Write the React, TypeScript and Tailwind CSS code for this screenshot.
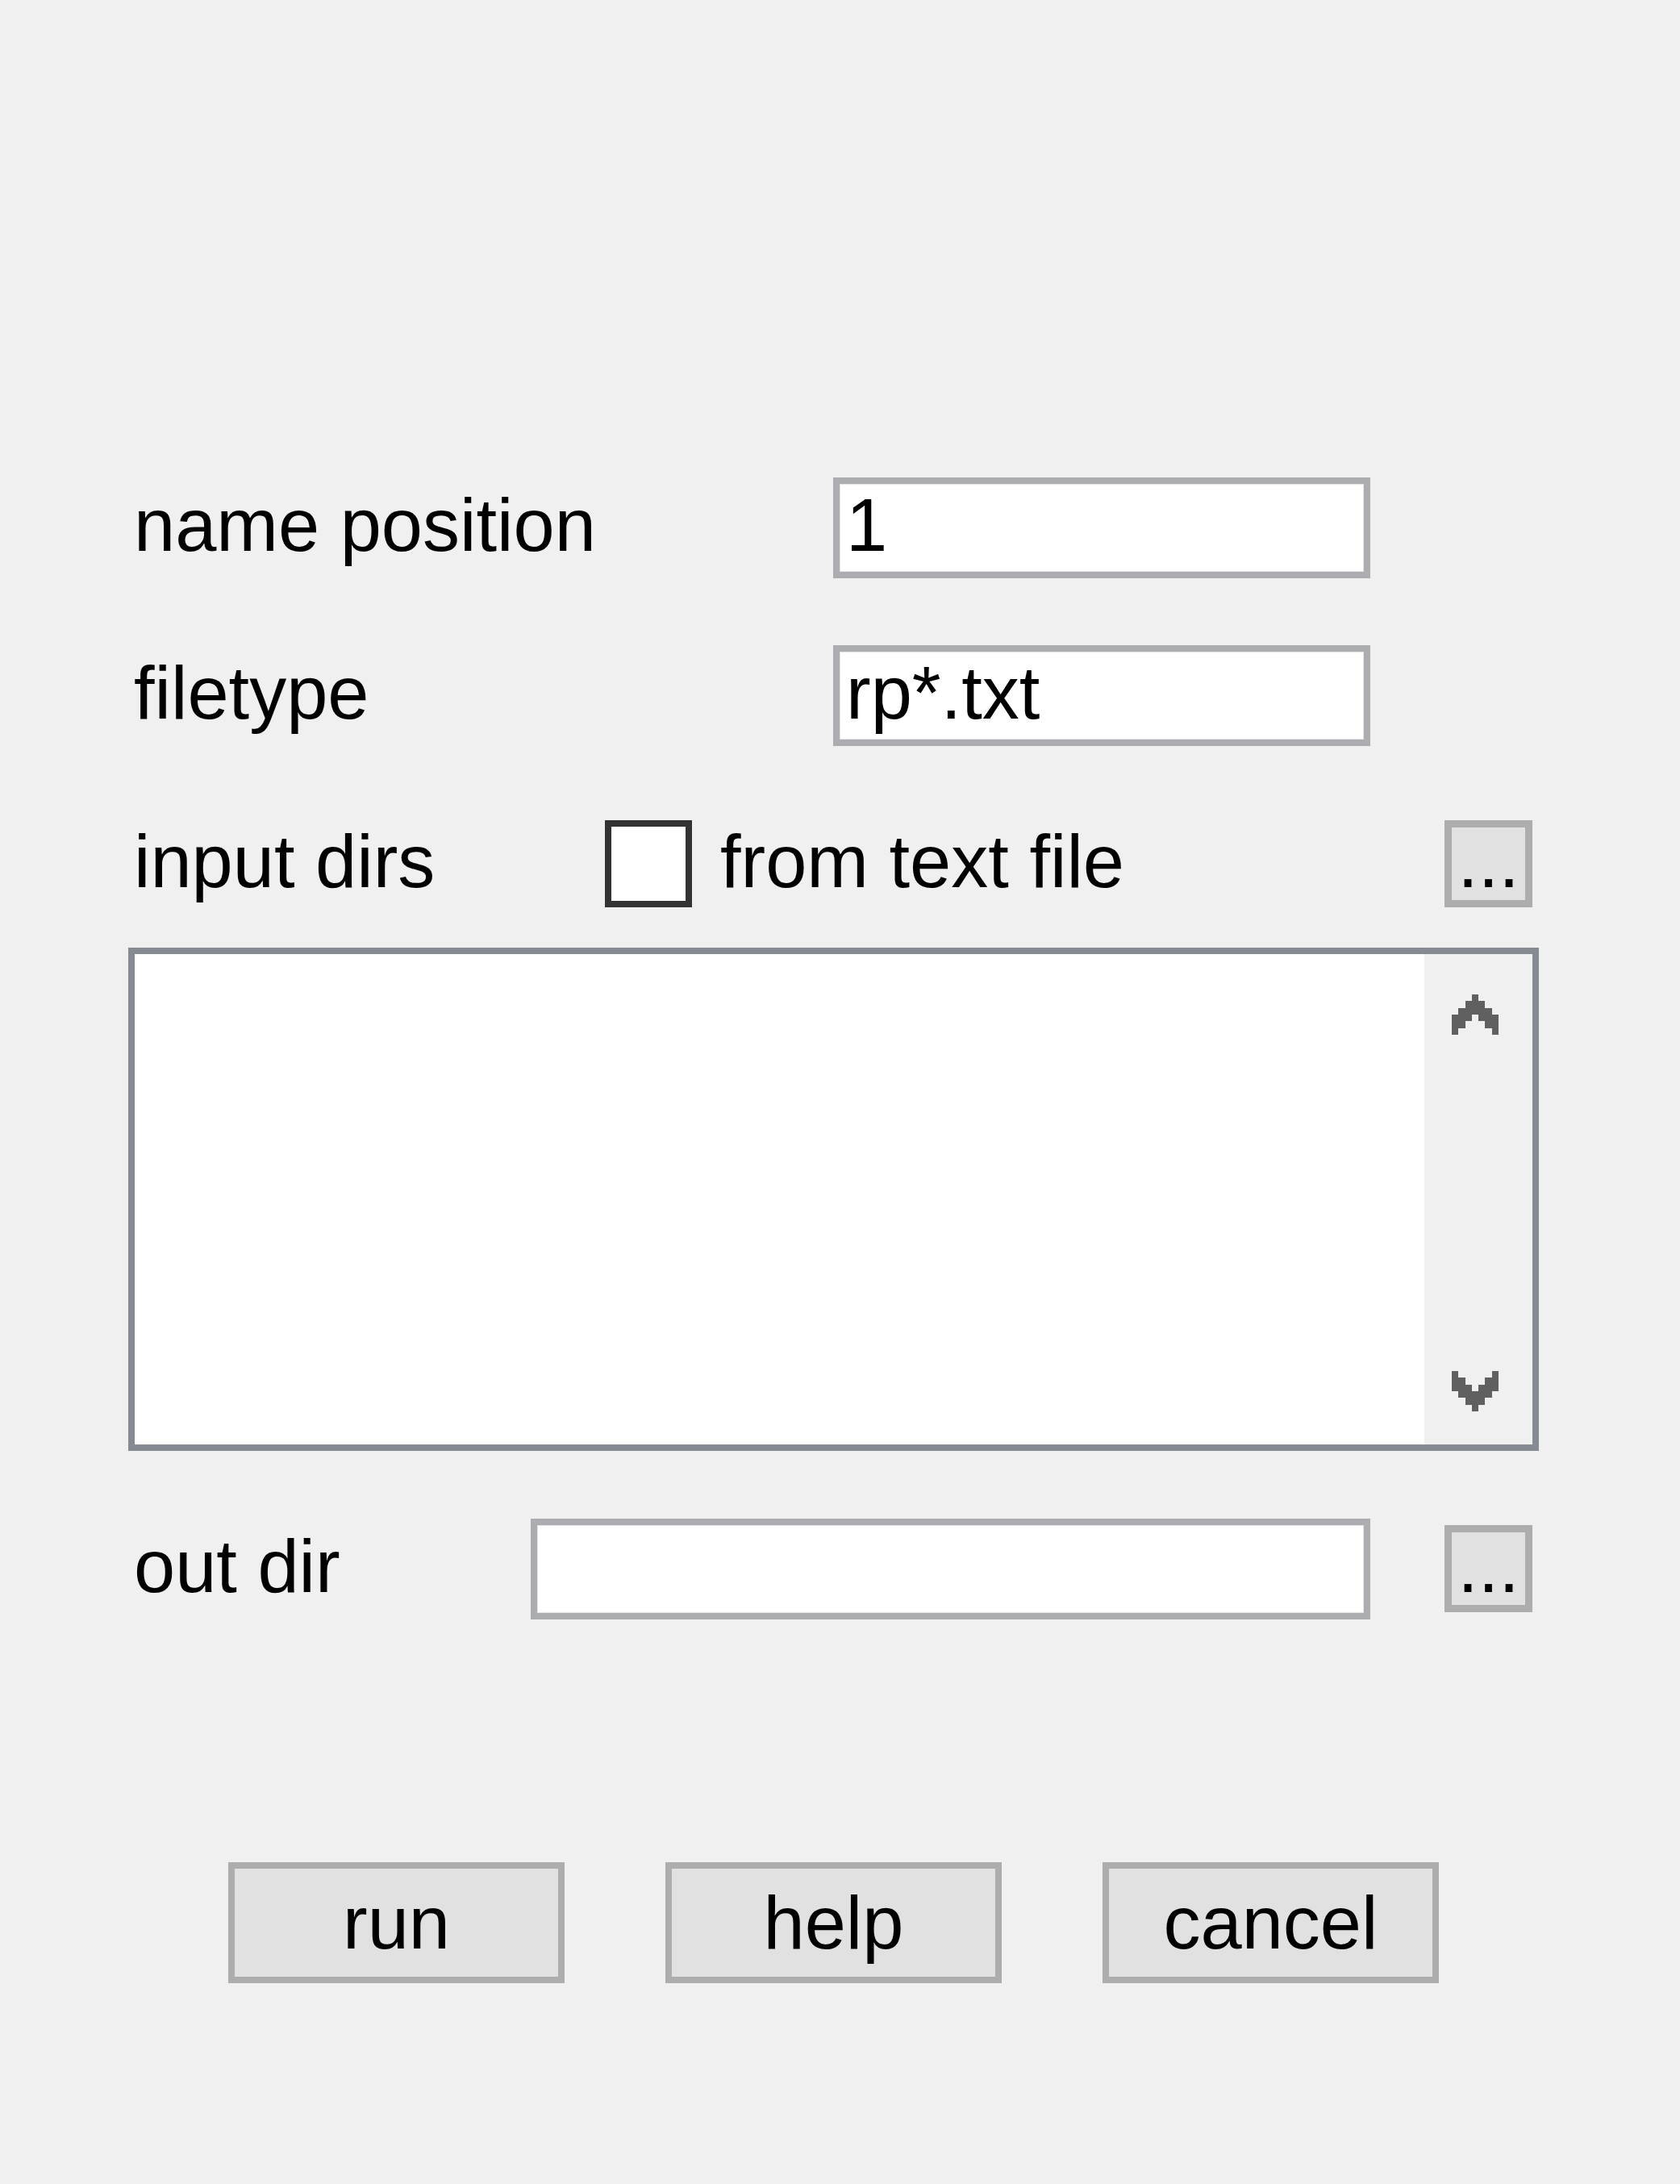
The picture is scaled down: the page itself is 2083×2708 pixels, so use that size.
import React from "react";

const UP: number[][] = [
  [3],
  [2, 3, 4],
  [1, 2, 3, 4, 5],
  [0, 1, 2, 4, 5, 6],
  [0, 1, 5, 6],
  [0, 6],
];
const DOWN: number[][] = [
  [0, 6],
  [0, 1, 5, 6],
  [0, 1, 2, 4, 5, 6],
  [1, 2, 3, 4, 5],
  [2, 3, 4],
  [3],
];

function PixelArrow({ rows }: { rows: number[][] }) {
  return (
    <svg width="58" height="50" viewBox="0 0 7 6" shapeRendering="crispEdges" className="block">
      {rows.map((cols, r) =>
        cols.map((c) => <rect key={`${r}-${c}`} x={c} y={r} width="1" height="1" fill="#606060" />)
      )}
    </svg>
  );
}

function TextField({ value, width }: { value: string; width: string }) {
  return (
    <div
      className={`${width} h-[125px] border-[8px] border-[#acadb1] bg-white pl-[8px] pt-[5px] leading-none shadow-[inset_0_0_0_1px_#e4e4e4]`}
    >
      {value}
    </div>
  );
}

function DotsButton() {
  return (
    <div className="w-[109px] h-[108px] border-[9px] border-[#adadad] bg-[#e1e1e1] flex justify-center leading-[84px]">
      ...
    </div>
  );
}

function PushButton({ label }: { label: string }) {
  return (
    <div className="w-[417px] h-[150px] border-[8px] border-[#adadad] bg-[#e1e1e1] flex items-center justify-center leading-none">
      {label}
    </div>
  );
}

export default function App() {
  return (
    <div
      className="w-full h-[2708px] bg-[#f0f0f0] text-black text-[92px] pt-[592px] pl-[159px]"
      style={{ fontFamily: '"Liberation Sans", Arial, sans-serif' }}
    >
      {/* name position */}
      <div className="flex items-baseline">
        <div className="w-[874px] pl-[7px] leading-none">name position</div>
        <TextField value="1" width="w-[666px]" />
      </div>

      {/* filetype */}
      <div className="flex items-baseline mt-[83px]">
        <div className="w-[874px] pl-[7px] leading-none">filetype</div>
        <TextField value="rp*.txt" width="w-[666px]" />
      </div>

      {/* input dirs */}
      <div className="flex items-start mt-[92px] h-[108px]">
        <div className="w-[591px] pl-[7px] pt-[5px] leading-none">input dirs</div>
        <div className="w-[108px] h-[108px] border-[8px] border-[#333333] bg-white" />
        <div className="ml-[35px] w-[898px] pt-[5px] leading-none">from text file</div>
        <DotsButton />
      </div>

      {/* list box */}
      <div className="mt-[50px] w-[1749px] h-[624px] border-[8px] border-[#868a93] bg-white flex">
        <div className="flex-1" />
        <div className="w-[134px] bg-[#f0f0f0] flex flex-col items-start justify-between pl-[34px] pt-[50px] pb-[41px]">
          <PixelArrow rows={UP} />
          <PixelArrow rows={DOWN} />
        </div>
      </div>

      {/* out dir */}
      <div className="flex items-start mt-[84px]">
        <div className="w-[499px] pl-[7px] pt-[13px] leading-none">out dir</div>
        <TextField value="" width="w-[1041px]" />
        <div className="ml-[92px] mt-[8px]">
          <DotsButton />
        </div>
      </div>

      {/* buttons */}
      <div className="flex mt-[301px] ml-[124px] gap-[125px]">
        <PushButton label="run" />
        <PushButton label="help" />
        <PushButton label="cancel" />
      </div>
    </div>
  );
}
